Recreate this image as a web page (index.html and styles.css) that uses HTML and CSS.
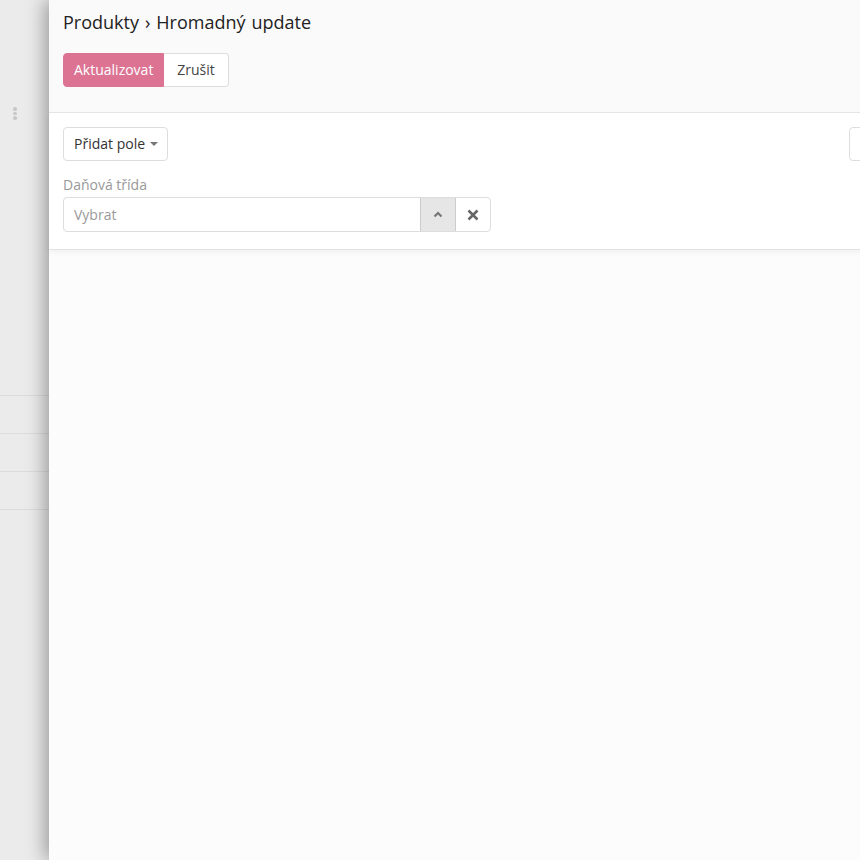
FILE: index.html
```html
<!DOCTYPE html>
<html>
<head>
<meta charset="utf-8">
<link rel="stylesheet" href="styles.css">
</head>
<body>
<div class="backdrop">
  <div class="kebab"><span></span><span></span><span></span></div>
  <div class="rows">
    <div class="row"></div>
    <div class="row"></div>
    <div class="row"></div>
    <div class="row"></div>
  </div>
</div>
<div class="drawer">
  <div class="drawer-head">
    <h1 class="title">Produkty › Hromadný update</h1>
    <div class="btn-group">
      <button class="btn btn-primary">Aktualizovat</button>
      <button class="btn btn-default">Zrušit</button>
    </div>
  </div>
  <div class="drawer-body">
    <div class="toolbar">
      <button class="btn btn-default btn-round">Přidat pole <span class="caret"></span></button>
      <button class="btn btn-default btn-round btn-right"></button>
    </div>
    <label class="field-label">Daňová třída</label>
    <div class="select">
      <div class="select-input">Vybrat</div>
      <div class="select-btn select-toggle">
        <svg width="10" height="7" viewBox="0 0 10 7"><path d="M1.5 5.5 L5 2 L8.5 5.5" fill="none" stroke="#777" stroke-width="2.2"/></svg>
      </div>
      <div class="select-btn select-clear">
        <svg width="12" height="12" viewBox="0 0 12 12"><path d="M1.5 1.5 L10.5 10.5 M10.5 1.5 L1.5 10.5" fill="none" stroke="#666" stroke-width="2.6"/></svg>
      </div>
    </div>
  </div>
</div>
</body>
</html>
```
FILE: styles.css
```css
html, body {
  margin: 0;
  padding: 0;
  height: 100%;
  overflow: hidden;
}
body {
  background: #ebebeb;
  font-family: "Open Sans", "Noto Sans", sans-serif;
  color: #333;
  position: relative;
}
.backdrop {
  padding-top: 107px;
  width: 49px;
}
.kebab {
  display: flex;
  flex-direction: column;
  gap: 1px;
  margin-left: 13px;
  height: 13px;
}
.kebab span {
  width: 4px;
  height: 4px;
  border-radius: 50%;
  background: #c8c8c8;
}
.rows {
  margin-top: 238px;
}
.row {
  height: 37px;
  border-bottom: 1px solid #dcdcdc;
}
.drawer {
  position: absolute;
  top: 0;
  left: 49px;
  width: 900px;
  height: 860px;
  background: #fcfcfc;
  box-shadow: -4px 0 18px rgba(0, 0, 0, 0.35);
}
.drawer-head {
  background: #fafafa;
  padding: 10px 14px 25px;
  border-bottom: 1px solid #e6e6e6;
}
.title {
  margin: 0 0 19px;
  font-size: 18px;
  font-weight: 400;
  line-height: 24px;
  word-spacing: 1.3px;
  color: #222;
}
.btn-group {
  display: flex;
}
.btn {
  font-family: inherit;
  font-size: 14px;
  height: 34px;
  padding: 0 10px;
  border: 1px solid #ddd;
  background: #fff;
  color: #444;
  line-height: 32px;
  margin: 0;
  white-space: nowrap;
}
.btn-primary {
  background: #dc7393;
  border-color: #dc7393;
  color: #fff;
  border-radius: 4px 0 0 4px;
  width: 101px;
}
.btn-group .btn-default {
  border-left: none;
  border-radius: 0 4px 4px 0;
  width: 65px;
}
.drawer-body {
  background: #fff;
  padding: 14px 14px 17px;
  border-bottom: 1px solid #e3e3e3;
  box-shadow: 0 2px 6px rgba(0, 0, 0, 0.05);
}
.toolbar {
  display: flex;
  justify-content: space-between;
  width: 826px;
}
.btn-round {
  border-radius: 4px;
  display: flex;
  align-items: center;
  gap: 5px;
  width: 105px;
  color: #333;
}
.btn-right {
  width: 40px;
}
.caret {
  width: 0;
  height: 0;
  border-left: 4px solid transparent;
  border-right: 4px solid transparent;
  border-top: 4px solid #777;
}
.field-label {
  display: block;
  margin-top: 14px;
  font-size: 14px;
  line-height: 20px;
  color: #999;
}
.select {
  display: flex;
  width: 428px;
  height: 35px;
  margin-top: 2px;
  box-sizing: border-box;
  border: 1px solid #ddd;
  border-radius: 4px;
  overflow: hidden;
}
.select-input {
  flex: 1;
  padding-left: 10px;
  font-size: 14px;
  line-height: 33px;
  color: #999;
}
.select-btn {
  box-sizing: border-box;
  display: flex;
  align-items: center;
  justify-content: center;
}
.select-toggle {
  width: 36px;
  background: #e6e6e6;
  border-left: 1px solid #ccc;
  border-right: 1px solid #ccc;
}
.select-clear {
  width: 34px;
}
```
